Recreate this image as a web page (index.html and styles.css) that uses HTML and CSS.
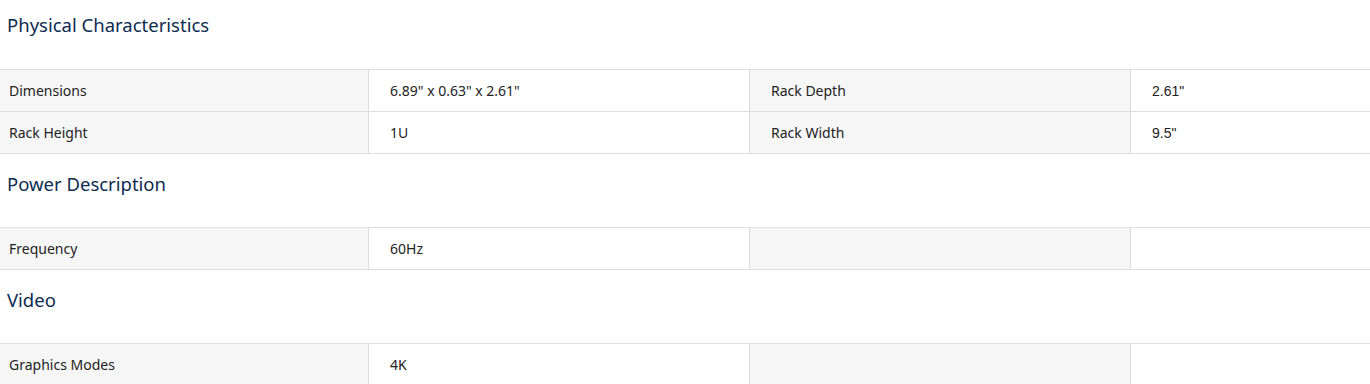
FILE: index.html
```html
<!DOCTYPE html>
<html lang="en">
<head>
<meta charset="utf-8">
<title>Specifications</title>
<link rel="stylesheet" href="styles.css">
</head>
<body>
<div class="specs">
  <section class="spec-group">
    <h3 class="spec-title">Physical Characteristics</h3>
    <div class="spec-table">
      <div class="spec-row">
        <div class="cell label">Dimensions</div>
        <div class="cell value">6.89" x 0.63" x 2.61"</div>
        <div class="cell label">Rack Depth</div>
        <div class="cell value alt">2.61"</div>
      </div>
      <div class="spec-row">
        <div class="cell label">Rack Height</div>
        <div class="cell value">1U</div>
        <div class="cell label">Rack Width</div>
        <div class="cell value alt">9.5"</div>
      </div>
    </div>
  </section>
  <section class="spec-group">
    <h3 class="spec-title">Power Description</h3>
    <div class="spec-table">
      <div class="spec-row">
        <div class="cell label">Frequency</div>
        <div class="cell value">60Hz</div>
        <div class="cell label"></div>
        <div class="cell value alt"></div>
      </div>
    </div>
  </section>
  <section class="spec-group">
    <h3 class="spec-title">Video</h3>
    <div class="spec-table">
      <div class="spec-row">
        <div class="cell label">Graphics Modes</div>
        <div class="cell value">4K</div>
        <div class="cell label"></div>
        <div class="cell value alt"></div>
      </div>
    </div>
  </section>
</div>
</body>
</html>
```
FILE: styles.css
```css
html, body {
  margin: 0;
  padding: 0;
  background: #ffffff;
}
body {
  font-family: "Noto Sans", "Open Sans", sans-serif;
  color: #222222;
}
.specs {
  width: 1370px;
}
.spec-title {
  margin: 0;
  padding: 17px 7px 30px;
  font-size: 18.5px;
  line-height: 26px;
  font-weight: 400;
  color: #0d2c50;
}
.spec-group:first-child .spec-title {
  padding-top: 12px;
  padding-bottom: 31px;
}
.spec-table {
  border-top: 1px solid #dddddd;
}
.spec-row {
  display: grid;
  grid-template-columns: 368px 381px 381px 1fr;
  border-bottom: 1px solid #dddddd;
  height: 41px;
}
.cell {
  display: flex;
  align-items: center;
  font-size: 14px;
  line-height: 20px;
  padding-left: 21px;
  border-left: 1px solid #dddddd;
}
.cell:first-child {
  border-left: none;
  padding-left: 9px;
}
.label {
  background: #f6f6f6;
}
.value {
  background: #ffffff;
}
.value.alt {
  font-family: "Liberation Sans", Arial, sans-serif;
}
```
